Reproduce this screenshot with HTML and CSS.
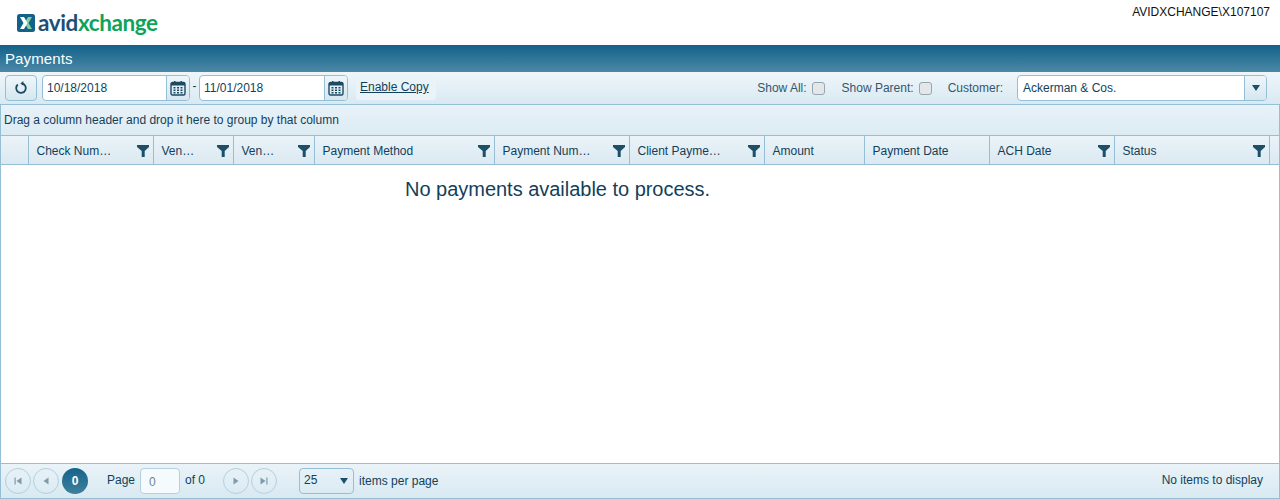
FILE: index.html
```html
<!DOCTYPE html>
<html lang="en">
<head>
    <meta charset="UTF-8">
    <meta name="viewport" content="width=device-width, initial-scale=1.0">
    <title>Payments</title>
    <link rel="stylesheet" href="styles.css">
</head>
<body>
    <svg class="sprites" width="0" height="0">
        <symbol id="cal" viewBox="0 0 16 16">
            <path d="M2.500 2.500h11a1.500 1.500 0 0 1 1.500 1.500v9.500a1.500 1.500 0 0 1-1.500 1.500h-11A1.500 1.500 0 0 1 1 13.500V4a1.500 1.500 0 0 1 1.500-1.500z" fill="none" stroke="#1c4a63" stroke-width="1.400"/>
            <path d="M1 3h14v2.500H1z" fill="#1c4a63"/>
            <path d="M4 1h1.500v3H4zM10.500 1H12v3h-1.500z" fill="#1c4a63"/>
            <path d="M3.500 7h2v1.500h-2zM7 7h2v1.500H7zM10.500 7h2v1.500h-2zM3.500 9.500h2V11h-2zM7 9.500h2V11H7zM10.500 9.500h2V11h-2zM3.500 12h2v1.500h-2zM7 12h2v1.500H7zM10.500 12h2v1.500h-2z" fill="#1c4a63"/>
        </symbol>
        <symbol id="filter" viewBox="0 0 12 12">
            <path d="M0 0h12v2L7.700 6v6h-3V6L0 2z" fill="#1c5068"/>
        </symbol>
    </svg>

    <header class="topbar">
        <div class="logo">
            <svg class="logo-mark" width="18" height="18" viewBox="0 0 18 18">
                <rect width="18" height="18" rx="2.500" fill="#12618a"/>
                <path d="M15 3h-4l-3.500 6 3.500 6h4l-3.500-6z" fill="#7fcf9f"/>
                <path d="M3 3h4l3.500 6L7 15H3l3.500-6z" fill="#fff"/>
            </svg>
            <span class="logo-text"><span class="logo-avid">avid</span><span class="logo-xchange">xchange</span></span>
        </div>
        <div class="user">AVIDXCHANGE\X107107</div>
    </header>

    <div class="title-bar">Payments</div>

    <div class="toolbar">
        <button class="refresh" type="button">
            <svg width="14" height="14" viewBox="0 0 14 14">
                <path d="M3.800 3.500A4.800 4.800 0 1 0 8 2.400" fill="none" stroke="#1c4a63" stroke-width="1.800"/>
                <path d="M7.600 0v4.800l3-2.400z" fill="#1c4a63" transform="rotate(180 8.500 2.400)"/>
            </svg>
        </button>
        <div class="date-box">
            <span class="date-value">10/18/2018</span>
            <span class="date-btn"><svg width="16" height="16"><use href="#cal"/></svg></span>
        </div>
        <span class="dash">-</span>
        <div class="date-box date-box-end">
            <span class="date-value">11/01/2018</span>
            <span class="date-btn"><svg width="16" height="16"><use href="#cal"/></svg></span>
        </div>
        <a class="enable-copy" href="#">Enable Copy</a>

        <div class="toolbar-right">
            <label class="check-label check-label-all">Show All:<span class="check"></span></label>
            <label class="check-label">Show Parent:<span class="check"></span></label>
            <span class="customer-label">Customer:</span>
            <div class="customer">
                <span class="customer-value">Ackerman &amp; Cos.</span>
                <span class="customer-btn"><span class="arrow-down"></span></span>
            </div>
        </div>
    </div>

    <div class="grid">
        <div class="group-bar">Drag a column header and drop it here to group by that column</div>
        <div class="grid-head">
            <div class="th th-first"></div>
            <div class="th th-check"><span class="th-text">Check Num…</span><svg class="funnel" width="12" height="12"><use href="#filter"/></svg></div>
            <div class="th th-ven"><span class="th-text">Ven…</span><svg class="funnel" width="12" height="12"><use href="#filter"/></svg></div>
            <div class="th th-ven2"><span class="th-text">Ven…</span><svg class="funnel" width="12" height="12"><use href="#filter"/></svg></div>
            <div class="th th-method"><span class="th-text">Payment Method</span><svg class="funnel" width="12" height="12"><use href="#filter"/></svg></div>
            <div class="th th-num"><span class="th-text">Payment Num…</span><svg class="funnel" width="12" height="12"><use href="#filter"/></svg></div>
            <div class="th th-num"><span class="th-text">Client Payme…</span><svg class="funnel" width="12" height="12"><use href="#filter"/></svg></div>
            <div class="th th-amount"><span class="th-text">Amount</span></div>
            <div class="th th-date"><span class="th-text">Payment Date</span></div>
            <div class="th th-date"><span class="th-text">ACH Date</span><svg class="funnel" width="12" height="12"><use href="#filter"/></svg></div>
            <div class="th th-status"><span class="th-text">Status</span><svg class="funnel" width="12" height="12"><use href="#filter"/></svg></div>
        </div>
        <div class="grid-body">
            <p class="empty">No payments available to process.</p>
        </div>
        <div class="pager">
            <span class="page-btn"><svg width="8" height="8" viewBox="0 0 8 8"><path d="M0.500 0.500h1.200v7H0.500zM7.500 0.500v7L2.500 4z" fill="#7f9aa9"/></svg></span>
            <span class="page-btn"><svg width="6" height="8" viewBox="0 0 6 8"><path d="M5.500 0.500v7L0.500 4z" fill="#7f9aa9"/></svg></span>
            <span class="page-current">0</span>
            <span class="page-label">Page</span>
            <span class="page-input">0</span>
            <span class="page-of">of 0</span>
            <span class="page-btn page-next"><svg width="6" height="8" viewBox="0 0 6 8"><path d="M0.500 0.500v7L5.500 4z" fill="#7f9aa9"/></svg></span>
            <span class="page-btn"><svg width="8" height="8" viewBox="0 0 8 8"><path d="M0.500 0.500v7L5.500 4zM6.300 0.500h1.200v7H6.300z" fill="#7f9aa9"/></svg></span>
            <div class="page-size"><span>25</span><span class="arrow-down"></span></div>
            <span class="page-items">items per page</span>
            <span class="page-info">No items to display</span>
        </div>
    </div>
</body>
</html>
```

FILE: styles.css
```css
* {
    box-sizing: border-box;
}

body {
    margin: 0;
    height: 499px;
    overflow: hidden;
    display: flex;
    flex-direction: column;
    font-family: "Liberation Sans", Arial, sans-serif;
    font-size: 12px;
    color: #123f5a;
    background-color: #fff;
}

.sprites {
    position: absolute;
}

.topbar {
    height: 45px;
    flex: none;
    display: flex;
    justify-content: space-between;
    padding: 5px 10px 0 17px;
    background-color: #fff;
}

.logo {
    display: flex;
    align-items: center;
    height: 36px;
}

.logo-mark {
    flex: none;
}

.logo-text {
    margin-left: 3px;
    font-family: "Lato", sans-serif;
    font-size: 22.500px;
    letter-spacing: -0.400px;
    font-weight: 700;
    line-height: 36px;
}

.logo-avid {
    color: #1b4f78;
}

.logo-xchange {
    color: #0ea35a;
}

.user {
    color: #111;
    line-height: 14px;
}

.title-bar {
    height: 27px;
    flex: none;
    padding-left: 5px;
    font-size: 15px;
    letter-spacing: 0.100px;
    line-height: 27px;
    color: #fff;
    background: linear-gradient(#12628a, #4c88a6);
}

.toolbar {
    height: 32px;
    flex: none;
    display: flex;
    align-items: center;
    padding: 3px 13px 3px 5px;
    background: linear-gradient(#eef6fa, #d9e9f2);
}

.refresh {
    width: 32px;
    height: 26px;
    padding: 0;
    display: flex;
    align-items: center;
    justify-content: center;
    border: 1px solid #94bfd4;
    border-radius: 4px;
    background: linear-gradient(#eef6fa, #d6e7f0);
}

.date-box {
    width: 148px;
    height: 26px;
    margin-left: 5px;
    display: flex;
    border: 1px solid #94bfd4;
    border-radius: 4px;
    overflow: hidden;
    background-color: #fff;
}

.date-box-end {
    width: 149px;
    margin-left: 0;
}

.date-value {
    flex: 1;
    padding-left: 4px;
    line-height: 24px;
}

.date-btn {
    width: 23px;
    display: flex;
    align-items: center;
    justify-content: center;
    border-left: 1px solid #94bfd4;
    background: linear-gradient(#eef6fa, #d6e7f0);
}

.dash {
    width: 9px;
    text-align: center;
    line-height: 22px;
    align-self: flex-start;
}

.enable-copy {
    margin-left: 8px;
    padding: 0 4px;
    width: 80px;
    height: 25px;
    line-height: 25px;
    align-self: flex-start;
    white-space: nowrap;
    color: #123f5a;
    border-radius: 4px;
    background-color: #e9f3f8;
}

.toolbar-right {
    margin-left: auto;
    display: flex;
    align-items: center;
}

.check-label {
    display: flex;
    align-items: center;
    margin-right: 16px;
    color: #35566b;
}

.check-label-all {
    margin-right: 17px;
}

.check {
    width: 13px;
    height: 13px;
    margin-left: 5px;
    border: 1px solid #98a6b0;
    border-radius: 3px;
    background-color: #e4e7ea;
}

.customer-label {
    margin-right: 14px;
    color: #35566b;
}

.customer {
    width: 250px;
    height: 26px;
    display: flex;
    border: 1px solid #94bfd4;
    border-radius: 4px;
    overflow: hidden;
    background-color: #fff;
}

.customer-value {
    flex: 1;
    padding-left: 5px;
    line-height: 24px;
}

.customer-btn {
    width: 22px;
    display: flex;
    align-items: center;
    justify-content: center;
    border-left: 1px solid #94bfd4;
    background: linear-gradient(#eef6fa, #d6e7f0);
}

.arrow-down {
    width: 0;
    height: 0;
    border-left: 4px solid transparent;
    border-right: 4px solid transparent;
    border-top: 6px solid #1c5068;
}

.grid {
    flex: 1;
    min-height: 0;
    display: flex;
    flex-direction: column;
    border: 1px solid #94bfd4;
}

.group-bar {
    height: 31px;
    flex: none;
    padding-left: 3px;
    line-height: 30px;
    background: linear-gradient(#e8f2f8, #dcebf3);
    border-bottom: 1px solid #94bfd4;
}

.grid-head {
    height: 29px;
    flex: none;
    display: flex;
    border-bottom: 1px solid #94bfd4;
    background: linear-gradient(#eaf3f8, #dbe9f2);
}

.th {
    display: flex;
    align-items: center;
    justify-content: space-between;
    padding: 1px 4px 0 7.500px;
    border-right: 1px solid #94bfd4;
}

.th-first {
    width: 28px;
}

.th-check {
    width: 125px;
}

.th-ven {
    width: 80px;
}

.th-ven2 {
    width: 81px;
}

.th-method {
    width: 180px;
}

.th-num {
    width: 135px;
}

.th-amount {
    width: 100px;
}

.th-date {
    width: 125px;
}

.th-status {
    width: 155px;
}

.grid-body {
    flex: 1;
    background-color: #fff;
}

.empty {
    margin: 13px 0 0 404px;
    font-size: 20px;
    line-height: 23px;
    letter-spacing: -0.020px;
}

.pager {
    height: 35px;
    flex: none;
    display: flex;
    align-items: center;
    padding-left: 4px;
    border-top: 1px solid #94bfd4;
    background: linear-gradient(#eaf3f8, #d9e9f2);
}

.page-btn {
    width: 26px;
    height: 26px;
    margin-right: 2px;
    display: flex;
    align-items: center;
    justify-content: center;
    border: 1px solid #b4d0de;
    border-radius: 50%;
}

.page-current {
    width: 26px;
    height: 26px;
    margin-left: 1px;
    display: flex;
    align-items: center;
    justify-content: center;
    border-radius: 50%;
    font-weight: bold;
    color: #fff;
    background: linear-gradient(#15648a, #3f7f9e);
}

.page-label {
    margin-left: 19px;
    margin-bottom: 2px;
}

.page-input {
    width: 40px;
    height: 26px;
    margin-left: 5px;
    padding-left: 8px;
    line-height: 26px;
    color: #6b8697;
    border: 1px solid #b4d0de;
    border-radius: 4px;
    background-color: #f5fafc;
}

.page-of {
    margin-left: 5px;
    margin-bottom: 2px;
}

.page-next {
    margin-left: 18px;
}

.page-size {
    width: 55px;
    height: 26px;
    margin-left: 20px;
    padding: 0 5px 0 4px;
    display: flex;
    align-items: center;
    justify-content: space-between;
    border: 1px solid #94bfd4;
    border-radius: 4px;
}

.page-size span:first-child {
    margin-bottom: 2px;
}

.page-items {
    margin-left: 5px;
    margin-bottom: 1px;
}

.page-info {
    margin-left: auto;
    margin-right: 16px;
    margin-bottom: 2px;
}
```
